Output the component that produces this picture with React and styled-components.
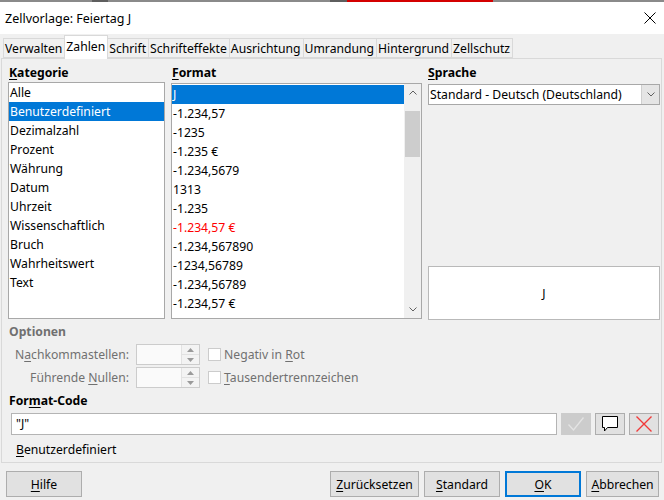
import React from "react";
import styled, { createGlobalStyle } from "styled-components";

const Global = createGlobalStyle`
  html, body { margin: 0; padding: 0; }
  body {
    font-family: "Noto Sans", "Open Sans", sans-serif;
    font-size: 12px;
    color: #000;
    background: #f0f0f0;
  }
  * { box-sizing: border-box; }
`;

const Window = styled.div`
  width: 664px;
  height: 500px;
  display: flex;
  flex-direction: column;
  background: #f0f0f0;
  overflow: hidden;
`;

const TopStrip = styled.div`
  height: 2px;
  flex: none;
  background: linear-gradient(
    to right,
    #8a8a8a 0, #8a8a8a 92px,
    #5e5e5e 92px, #5e5e5e 108px,
    #8a8a8a 108px, #8a8a8a 330px,
    #5e5e5e 330px, #5e5e5e 347px,
    #d40000 347px, #d40000 493px,
    #8a8a8a 493px
  );
`;

const TitleBar = styled.div`
  height: 32px;
  flex: none;
  background: #fff;
  display: flex;
  align-items: center;
  justify-content: space-between;
  padding: 0 8px 0 5px;
`;

const Title = styled.span`
  font-size: 12.5px;
  color: #000;
`;

const CloseIcon = styled.svg`
  width: 12px;
  height: 12px;
  display: block;
`;

const TabBar = styled.div`
  height: 24px;
  flex: none;
  display: flex;
  align-items: flex-end;
  padding-left: 4px;
  position: relative;
  z-index: 1;
`;

const Tab = styled.div`
  height: ${(p) => (p.$active ? "24px" : "20px")};
  margin-bottom: ${(p) => (p.$active ? "-1px" : "0")};
  padding: ${(p) => (p.$active ? "0 2px 3px 1px" : "0 2px 0 1px")};
  display: flex;
  align-items: center;
  font-size: 12.2px;
  background: ${(p) => (p.$active ? "#fff" : "#f0f0f0")};
  border: 1px solid #d9d9d9;
  border-bottom: ${(p) => (p.$active ? "none" : "1px solid #d9d9d9")};
  margin-left: -1px;
  white-space: nowrap;
`;

const Panel = styled.div`
  height: 405px;
  flex: none;
  margin: 0 2px 0 1px;
  border: 1px solid #d9d9d9;
  background: #f0f0f0;
  padding: 6px 2px 0 6px;
  display: flex;
  flex-direction: column;
`;

const Columns = styled.div`
  display: grid;
  grid-template-columns: 157px 251px 232px;
  column-gap: 6px;
  height: 254px;
`;

const Column = styled.div`
  display: flex;
  flex-direction: column;
  min-height: 0;
`;

const SectionLabel = styled.div`
  font-weight: bold;
  height: ${(p) => p.$h || 17}px;
  line-height: 16px;
  padding-left: ${(p) => p.$indent || 0}px;
  color: ${(p) => (p.$disabled ? "#707070" : "#000")};
  flex: none;
  font-size: 12.2px;
  u { text-decoration-thickness: 1px; text-underline-offset: 2px; }
`;

const ListBox = styled.div`
  flex: 1;
  background: #fff;
  border: 1px solid #a8a8a8;
  display: flex;
  min-height: 0;
  overflow: hidden;
`;

const ListItems = styled.div`
  flex: 1;
  display: flex;
  flex-direction: column;
  min-width: 0;
  padding-top: ${(p) => p.$pt || 0}px;
`;

const Item = styled.div`
  height: 19px;
  flex: none;
  line-height: 19px;
  padding-left: 1px;
  white-space: nowrap;
  background: ${(p) => (p.$selected ? "#0078d7" : "transparent")};
  color: ${(p) => (p.$selected ? "#fff" : p.$red ? "#ff0000" : "#000")};
  font-size: 12.2px;
`;

const Scrollbar = styled.div`
  width: 17px;
  flex: none;
  background: #f0f0f0;
  display: flex;
  flex-direction: column;
`;

const ScrollArrow = styled.div`
  height: 17px;
  flex: none;
  display: flex;
  align-items: center;
  justify-content: center;
`;

const ScrollTrack = styled.div`
  flex: 1;
  display: flex;
  flex-direction: column;
  padding: 10px 1px 0;
`;

const Thumb = styled.div`
  height: 46px;
  background: #cdcdcd;
`;

const Combo = styled.div`
  height: 21px;
  flex: none;
  background: #fff;
  border: 1px solid #a8a8a8;
  display: flex;
  align-items: stretch;
  margin-top: 2px;
`;

const ComboText = styled.div`
  flex: 1;
  line-height: 19px;
  padding-left: 1px;
  font-size: 12.2px;
  white-space: nowrap;
`;

const ComboButton = styled.div`
  width: 18px;
  background: #e5e5e5;
  border-left: 1px solid #cfcfcf;
  display: flex;
  align-items: center;
  justify-content: center;
`;

const Spacer = styled.div`
  flex: 1;
`;

const Preview = styled.div`
  height: 54px;
  flex: none;
  background: #fff;
  border: 1px solid #b9b9b9;
  display: flex;
  align-items: center;
  justify-content: center;
  font-size: 12px;
  margin-bottom: -1px;
`;

const Options = styled.div`
  display: grid;
  grid-template-columns: 115px 64px max-content;
  column-gap: 7px;
  row-gap: 2px;
  padding-left: 6px;
  margin-top: 4px;
  align-items: center;
`;

const OptLabel = styled.div`
  text-align: right;
  color: #707070;
  font-size: 12.2px;
  white-space: nowrap;
  u { text-underline-offset: 2px; }
`;

const Spin = styled.div`
  height: 21px;
  border: 1px solid #cccccc;
  background: #fafafa;
  display: flex;
`;

const SpinInput = styled.div`
  flex: 1;
`;

const SpinButtons = styled.div`
  width: 18px;
  display: flex;
  flex-direction: column;
  border-left: 1px solid #e2e2e2;
  background: #f3f3f3;
`;

const SpinBtn = styled.div`
  flex: 1;
  display: flex;
  align-items: center;
  justify-content: center;
  border-top: ${(p) => (p.$lower ? "1px solid #e2e2e2" : "none")};
`;

const Check = styled.label`
  display: flex;
  align-items: center;
  gap: 3px;
  color: #707070;
  font-size: 12.2px;
  margin-left: 1px;
  u { text-underline-offset: 2px; }
`;

const Box = styled.span`
  width: 13px;
  height: 13px;
  border: 1px solid #cccccc;
  background: #fff;
  display: inline-block;
`;

const CodeRow = styled.div`
  display: flex;
  gap: 4px;
  height: 22px;
  padding-left: 3px;
  margin-top: 4px;
`;

const CodeInput = styled.div`
  flex: 1;
  background: #fff;
  border: 1px solid #b4b4b4;
  line-height: 20px;
  padding-left: 4px;
  font-size: 12px;
`;

const IconButton = styled.div`
  width: 30px;
  flex: none;
  display: flex;
  align-items: center;
  justify-content: center;
  background: ${(p) => (p.$disabled ? "#cccccc" : "#e1e1e1")};
  border: 1px solid ${(p) => (p.$disabled ? "#cccccc" : "#adadad")};
`;

const Description = styled.div`
  padding-left: 8px;
  margin-top: 7px;
  line-height: 16px;
  font-size: 12.2px;
  u { text-underline-offset: 2px; }
`;

const Footer = styled.div`
  flex: 1;
  display: flex;
  align-items: flex-start;
  padding: 8px 5px 0 6px;
  gap: 5px;
`;

const Button = styled.button`
  height: 26px;
  width: ${(p) => p.$w}px;
  font-family: inherit;
  font-size: 12.2px;
  color: #000;
  background: #e1e1e1;
  border: 1px solid ${(p) => (p.$default ? "#0078d7" : "#adadad")};
  box-shadow: ${(p) => (p.$default ? "inset 0 0 0 1px #0078d7" : "none")};
  padding: 0;
  margin-left: ${(p) => (p.$push ? "auto" : "0")};
  u { text-underline-offset: 2px; }
`;

const Chevron = ({ up }) => (
  <svg width="8" height="5" viewBox="0 0 8 5">
    <path
      d={up ? "M0.5 4.5 L4 1 L7.5 4.5" : "M0.5 0.5 L4 4 L7.5 0.5"}
      fill="none"
      stroke="#606060"
      strokeWidth="1"
    />
  </svg>
);

const Tri = ({ up }) => (
  <svg width="7" height="4" viewBox="0 0 7 4">
    <path d={up ? "M0 4 L3.5 0 L7 4 Z" : "M0 0 L3.5 4 L7 0 Z"} fill="#9a9a9a" />
  </svg>
);

const categories = [
  "Alle",
  "Benutzerdefiniert",
  "Dezimalzahl",
  "Prozent",
  "Währung",
  "Datum",
  "Uhrzeit",
  "Wissenschaftlich",
  "Bruch",
  "Wahrheitswert",
  "Text",
];

const formats = [
  { t: "J", sel: true },
  { t: "-1.234,57" },
  { t: "-1235" },
  { t: "-1.235 €" },
  { t: "-1.234,5679" },
  { t: "1313" },
  { t: "-1.235" },
  { t: "-1.234,57 €", red: true },
  { t: "-1.234,567890" },
  { t: "-1234,56789" },
  { t: "-1.234,56789" },
  { t: "-1.234,57 €" },
];

const tabs = [
  "Verwalten",
  "Zahlen",
  "Schrift",
  "Schrifteffekte",
  "Ausrichtung",
  "Umrandung",
  "Hintergrund",
  "Zellschutz",
];

export default function App() {
  return (
    <>
      <Global />
      <Window>
        <TopStrip />
        <TitleBar>
          <Title>Zellvorlage: Feiertag J</Title>
          <CloseIcon viewBox="0 0 12 12">
            <path d="M0.5 0.5 L11.5 11.5 M11.5 0.5 L0.5 11.5" stroke="#000" strokeWidth="1" />
          </CloseIcon>
        </TitleBar>
        <TabBar>
          {tabs.map((t) => (
            <Tab key={t} $active={t === "Zahlen"}>
              {t}
            </Tab>
          ))}
        </TabBar>
        <Panel>
          <Columns>
            <Column>
              <SectionLabel $h={17} $indent={1}>
                <u>K</u>ategorie
              </SectionLabel>
              <ListBox>
                <ListItems>
                  {categories.map((c) => (
                    <Item key={c} $selected={c === "Benutzerdefiniert"}>
                      {c}
                    </Item>
                  ))}
                </ListItems>
              </ListBox>
            </Column>
            <Column>
              <SectionLabel $h={18} $indent={1}>
                <u>F</u>ormat
              </SectionLabel>
              <ListBox>
                <ListItems $pt={1}>
                  {formats.map((f, i) => (
                    <Item key={i} $selected={f.sel} $red={f.red}>
                      {f.t}
                    </Item>
                  ))}
                </ListItems>
                <Scrollbar>
                  <ScrollArrow>
                    <Chevron up />
                  </ScrollArrow>
                  <ScrollTrack>
                    <Thumb />
                  </ScrollTrack>
                  <ScrollArrow>
                    <Chevron />
                  </ScrollArrow>
                </Scrollbar>
              </ListBox>
            </Column>
            <Column>
              <SectionLabel $h={17}>
                <u>S</u>prache
              </SectionLabel>
              <Combo>
                <ComboText>Standard - Deutsch (Deutschland)</ComboText>
                <ComboButton>
                  <Chevron />
                </ComboButton>
              </Combo>
              <Spacer />
              <Preview>J</Preview>
            </Column>
          </Columns>

          <SectionLabel $h={16} $indent={1} $disabled style={{ marginTop: 5 }}>
            Optionen
          </SectionLabel>
          <Options>
            <OptLabel>
              N<u>a</u>chkommastellen:
            </OptLabel>
            <Spin>
              <SpinInput />
              <SpinButtons>
                <SpinBtn>
                  <Tri up />
                </SpinBtn>
                <SpinBtn $lower>
                  <Tri />
                </SpinBtn>
              </SpinButtons>
            </Spin>
            <Check>
              <Box />
              <span>
                Negativ in <u>R</u>ot
              </span>
            </Check>
            <OptLabel>
              Führende <u>N</u>ullen:
            </OptLabel>
            <Spin>
              <SpinInput />
              <SpinButtons>
                <SpinBtn>
                  <Tri up />
                </SpinBtn>
                <SpinBtn $lower>
                  <Tri />
                </SpinBtn>
              </SpinButtons>
            </Spin>
            <Check>
              <Box />
              <span>
                <u>T</u>ausendertrennzeichen
              </span>
            </Check>
          </Options>

          <SectionLabel $h={16} $indent={1} style={{ marginTop: 5 }}>
            For<u>m</u>at-Code
          </SectionLabel>
          <CodeRow>
            <CodeInput>"J"</CodeInput>
            <IconButton $disabled>
              <svg width="18" height="16" viewBox="0 0 18 16">
                <path d="M1.5 8.5 L6.5 14 L16.5 1.5" fill="none" stroke="#e4e4e4" strokeWidth="1.3" />
              </svg>
            </IconButton>
            <IconButton>
              <svg width="18" height="18" viewBox="0 0 18 18">
                <path
                  d="M1.5 1.5 H16.5 V12.5 H6.5 L3.5 16 V12.5 H1.5 Z"
                  fill="#fff"
                  stroke="#000"
                  strokeWidth="1"
                  strokeLinejoin="miter"
                />
              </svg>
            </IconButton>
            <IconButton>
              <svg width="18" height="18" viewBox="0 0 18 18">
                <path d="M1.5 1.5 L16.5 16.5 M16.5 1.5 L1.5 16.5" stroke="#f03a3a" strokeWidth="1.4" />
              </svg>
            </IconButton>
          </CodeRow>
          <Description>
            <u>B</u>enutzerdefiniert
          </Description>
        </Panel>
        <Footer>
          <Button $w={76}>
            <u>H</u>ilfe
          </Button>
          <Button $w={89} $push>
            <u>Z</u>urücksetzen
          </Button>
          <Button $w={76}>
            <u>S</u>tandard
          </Button>
          <Button $w={76} $default>
            <u>O</u>K
          </Button>
          <Button $w={73}>
            <u>A</u>bbrechen
          </Button>
        </Footer>
      </Window>
    </>
  );
}
